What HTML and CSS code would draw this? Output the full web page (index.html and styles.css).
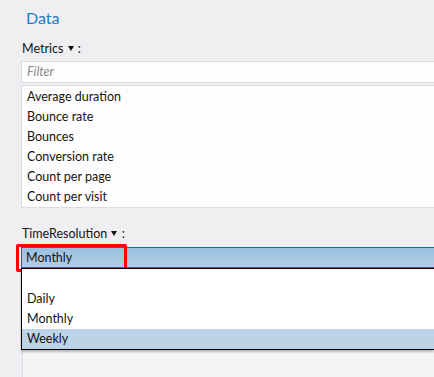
FILE: index.html
```html
<!DOCTYPE html>
<html>
<head>
<meta charset="utf-8">
<link rel="stylesheet" href="styles.css">
</head>
<body>
<div class="page">
  <h1 class="title">Data</h1>
  <div class="label">Metrics <span class="caret"></span> :</div>
  <div class="filter">Filter</div>
  <ul class="list">
    <li>Average duration</li>
    <li>Bounce rate</li>
    <li>Bounces</li>
    <li>Conversion rate</li>
    <li>Count per page</li>
    <li>Count per visit</li>
  </ul>
  <div class="label label-time">TimeResolution <span class="caret"></span> :</div>
  <div class="combo">
    <div class="select">Monthly</div>
    <div class="highlight"></div>
    <ul class="dropdown">
      <li class="empty"></li>
      <li>Daily</li>
      <li>Monthly</li>
      <li class="hover">Weekly</li>
    </ul>
  </div>
  <div class="panel"></div>
</div>
</body>
</html>
```
FILE: styles.css
```css
html, body {
  margin: 0;
  padding: 0;
  height: 100%;
  overflow: hidden;
}
body {
  background: #efeff2;
  font-family: "Lato", "Noto Sans", sans-serif;
  font-size: 12.5px;
  color: #141414;
}
.page {
  display: flex;
  flex-direction: column;
  height: 100%;
  padding-left: 21px;
  box-sizing: border-box;
}
.title {
  margin: 0;
  padding: 8px 0 0 5px;
  height: 28px;
  font-size: 16px;
  font-weight: normal;
  color: #1a7dd0;
  line-height: 20px;
}
.label {
  height: 16px;
  line-height: 16px;
  margin-top: 5px;
  padding-left: 1px;
}
.caret {
  display: inline-block;
  width: 0;
  height: 0;
  border-top: 5px solid #141414;
  border-left: 3.5px solid transparent;
  border-right: 3.5px solid transparent;
  vertical-align: 2px;
  margin: 0 1px;
}
.filter {
  margin-top: 4px;
  height: 20px;
  line-height: 20px;
  border: 1px solid #dcdce4;
  border-right: none;
  background: #fdfdfd;
  color: #8a8a8a;
  font-style: italic;
  padding-left: 5px;
}
.list {
  list-style: none;
  margin: 2px 0 0 0;
  padding: 1px 0 0 0;
  border: 1px solid #dcdce4;
  border-right: none;
  background: #fdfdfd;
}
.list li {
  height: 20px;
  line-height: 20px;
  padding-left: 5px;
}
.label-time {
  margin-top: 18px;
}
.combo {
  position: relative;
  margin-top: 5px;
}
.select {
  height: 19px;
  line-height: 19px;
  border: 1px solid #0a6cc6;
  border-right: none;
  background: linear-gradient(#9cc0e0, #afcde6);
  padding-left: 4px;
}
.highlight {
  position: absolute;
  left: -5px;
  top: -3px;
  width: 105px;
  height: 22px;
  border: 3px solid #ff0000;
  border-radius: 2px;
}
.dropdown {
  position: absolute;
  left: 0;
  right: 0;
  top: 21px;
  margin: 0;
  padding: 0;
  list-style: none;
  background: #ffffff;
  border: 1px solid #000000;
  border-right: none;
  box-shadow: 0 2px 2px rgba(0, 0, 0, 0.25);
  z-index: 2;
}
.dropdown li {
  height: 20px;
  line-height: 20px;
  padding-left: 5px;
}
.dropdown .hover {
  background: #bcd3e8;
}
.panel {
  flex: 1;
  background: #f5f5f5;
  border-left: 1px solid #dcdfe8;
  margin-left: 1px;
}
```
